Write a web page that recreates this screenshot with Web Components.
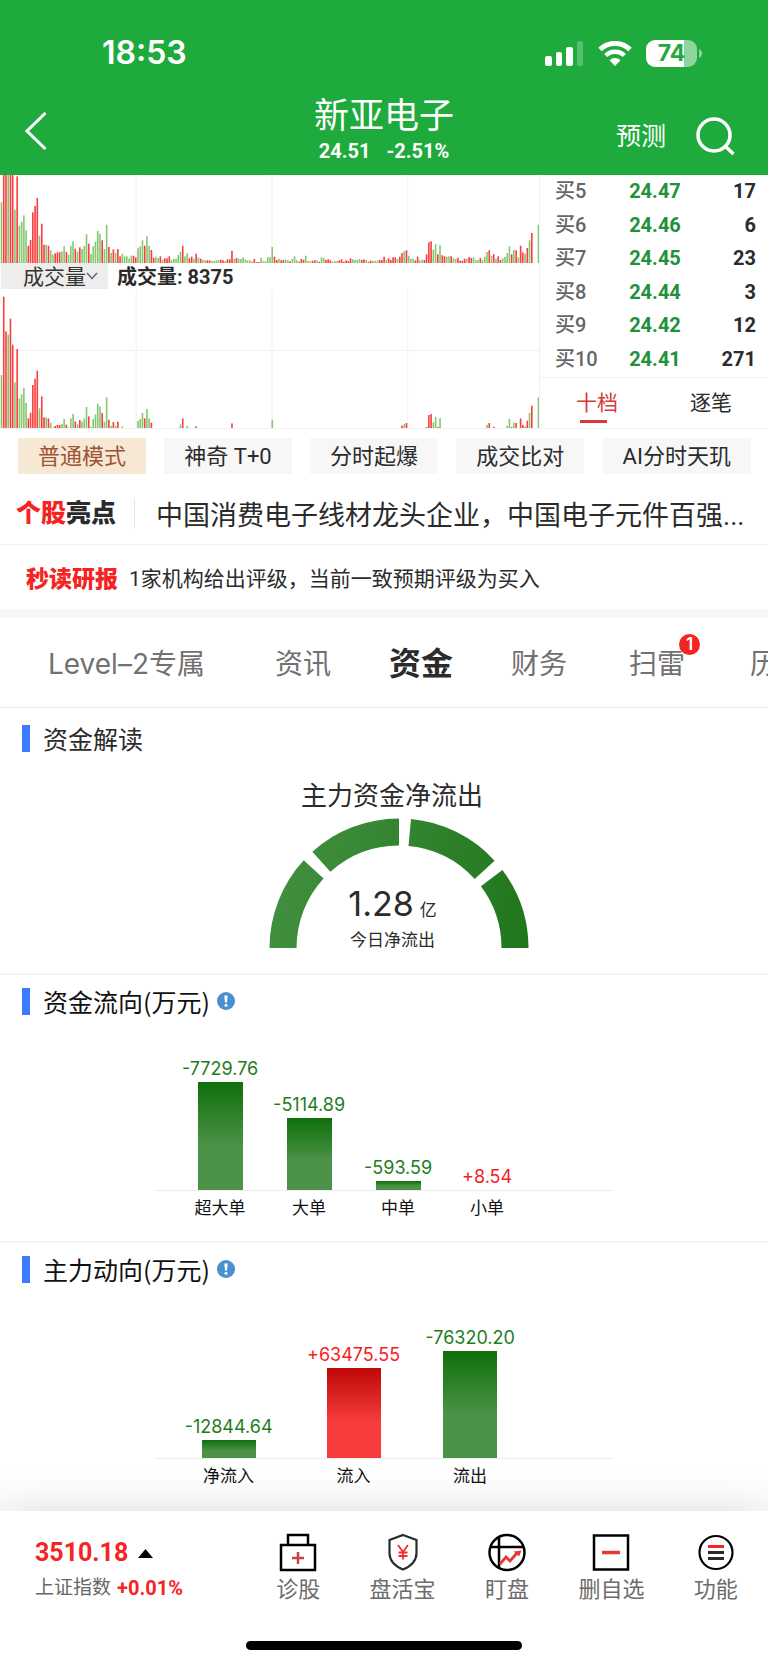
<!DOCTYPE html>
<html lang="zh-CN">
<head>
<meta charset="utf-8">
<meta name="viewport" content="width=device-width, initial-scale=1">
<title>新亚电子 24.51</title>
<style>
  html { background: #fff; }
  body {
    margin: 0;
    font-family: Inter, "Noto Sans CJK SC", sans-serif;
    color: #2b2b2b;
    --num: Roboto, "Noto Sans CJK SC", sans-serif;
    --green: #1eaa3c;
    --red: #f62323;
    --line: #f0f0f0;
  }
  news-line em { font-style: normal; color: var(--red); }
</style>
</head>
<body>
<stock-page>
  <status-bar slot="top"></status-bar>
  <stock-header slot="top" name="新亚电子" price="24.51" change="-2.51%"></stock-header>

  <market-panel>
    <volume-charts></volume-charts>
    <order-book slot="book"></order-book>
  </market-panel>
  <mode-chips></mode-chips>
  <news-line kind="highlight"><span slot="tag"><em>个股</em>亮点</span>中国消费电子线材龙头企业，中国电子元件百强...</news-line>
  <news-line kind="report"><span slot="tag">秒读研报</span>1家机构给出评级，当前一致预期评级为买入</news-line>
  <page-tabs></page-tabs>

  <info-section heading="资金解读" soft>
    <fund-gauge heading="主力资金净流出" value="1.28" unit="亿">今日净流出</fund-gauge>
  </info-section>
  <info-section heading="资金流向(万元)" help>
    <bar-chart kind="flow"></bar-chart>
  </info-section>
  <info-section heading="主力动向(万元)" help>
    <bar-chart kind="main"></bar-chart>
  </info-section>

  <bottom-bar slot="bottom"></bottom-bar>
</stock-page>

<script>
const element = (name, render) => customElements.define(name, class extends HTMLElement {
  connectedCallback() {
    if (this.shadowRoot) return;
    this.attachShadow({ mode: 'open' }).innerHTML = render(this);
  }
});

const RESET = `
  :host, *, *::before { box-sizing: border-box; }
  button { margin: 0; padding: 0; border: 0; background: none; font: inherit; color: inherit; cursor: pointer; white-space: nowrap; }
  svg { display: block; }
`;

element('stock-page', () => `
  <style>
    :host { display: flex; flex-direction: column; min-height: 100vh; overflow: hidden; }
    header { background: var(--green); color: #fff; }
    main { flex: 1; }
  </style>
  <header><slot name="top"></slot></header>
  <main><slot></slot></main>
  <slot name="bottom"></slot>`);

element('status-bar', () => `
  <style>${RESET}
    :host { display: flex; align-items: center; justify-content: space-between; padding: 33px 66px 0 102px; }
    time { font-size: 32px; line-height: 40px; font-weight: 600; }
    .state { display: flex; align-items: center; gap: 14px; }
    .battery { display: flex; align-items: center; gap: 1px; }
    .level { width: 51px; height: 27px; border-radius: 9px; text-align: center; font-size: 23px; font-weight: 700;
      line-height: 27px; color: var(--green); background: linear-gradient(90deg, #fff 38px, #8fd49d 38px); }
  </style>
  <time>18:53</time>
  <div class="state">
    <svg width="39" height="26" viewBox="0 0 39 26" fill="#fff" aria-label="信号">
      <rect x="0" y="16" width="7" height="10" rx="2"/><rect x="11" y="12" width="6" height="14" rx="2"/>
      <rect x="21" y="7" width="7" height="19" rx="2"/><rect x="32" y="1" width="6" height="25" rx="2" opacity=".25"/>
    </svg>
    <svg width="34" height="25" viewBox="0 0 34 25" aria-label="无线网络">
      <path d="M2 8.5a21.500 21.500 0 0 1 30 0" fill="none" stroke="#fff" stroke-width="5"/>
      <path d="M7.700 14.500a13.300 13.300 0 0 1 18.600 0" fill="none" stroke="#fff" stroke-width="4.500"/>
      <path d="M17 25l-5.500-5.800a8 8 0 0 1 11 0z" fill="#fff"/>
    </svg>
    <div class="battery"><div class="level">74</div>
      <svg width="4" height="9" viewBox="0 0 4 9"><path d="M1 0q3 1.500 3 4.500t-3 4.500z" fill="#8fd49d"/></svg>
    </div>
  </div>`);

element('stock-header', el => `
  <style>${RESET}
    :host { display: grid; grid-template-columns: 1fr auto 1fr; height: 102px; padding: 0 25px; }
    .back { align-self: center; justify-self: start; padding-top: 13px; }
    .title { padding-top: 17px; text-align: center; }
    h1 { margin: 0; font-size: 35px; line-height: 50px; font-weight: 400; }
    p { margin: 0; font: 700 20px/22px var(--num); display: flex; gap: 16px; justify-content: center; }
    .tools { display: flex; align-items: center; justify-content: flex-end; gap: 30px; padding: 24px 8px 0 0; }
    .predict { font-size: 25px; line-height: 36px; }
  </style>
  <button class="back" aria-label="返回">
    <svg width="22" height="38" viewBox="0 0 22 38" fill="none" stroke="#fff" stroke-width="3"><path d="M20.500 1 2 19l18.500 18"/></svg>
  </button>
  <div class="title">
    <h1>${el.getAttribute('name')}</h1>
    <p><span>${el.getAttribute('price')}</span><span>${el.getAttribute('change')}</span></p>
  </div>
  <div class="tools">
    <button class="predict">预测</button>
    <button aria-label="搜索">
      <svg width="39" height="38" viewBox="0 0 39 38" fill="none" stroke="#fff" stroke-width="3.500"><circle cx="18" cy="18" r="16"/><path d="M29 29l8.500 8"/></svg>
    </button>
  </div>`);

element('market-panel', () => `
  <style>
    :host { display: grid; grid-template-columns: minmax(0, 1fr) 228px; border-bottom: 1px solid var(--line); }
  </style>
  <slot></slot><slot name="book"></slot>`);

/* One entry per trading minute: direction, then volume in thirds of a pixel. */
const VOLUME = `g182 r417 r313 g303 r351 r273 g160 r260 g112 g124 g143 g98 r52 r69 r152 r171 r195 g82 r118 r55 g55 r52 g38 g25 r29 r32 r32 g35 g50 r33 g25 g52 g65 r43 g34 r47 g42 g51 g86 r58 g27 g50 g64 g96 g88 r68 g42 g115 r48 g30 r41 g30 r42 r20 g28 g20 g20 g13 g22 r22 r17
 g44 g50 g68 r52 g80 g52 r39 r16 g19 g15 r20 g10 r14 r14 r20 g9 g13 g13 g24 g34 r52 g20 g29 r14 r19 g13 r28 g17 r13 g10 g8 r8 r8 g6 g6 g8 g9 r10 r8 g6 r11 r11 r37 g12 r15 g13 g12 g17 g10 g8 g8 g5 r12 r3 r3 g16 g5 g6 g17
 g17 g48 r19 r9 g13 r8 r9 g11 g8 r5 g12 g20 g8 g5 r12 r10 g22 g6 g5 r7 r8 g8 r4 g17 g15 r9 r11 r8 g4 g6 g6 r8 r11 r4 r8 r6 r14 g11 g9 g10 g12 r9 r11 g9 r4 r7 g7 g6 g7 r9 r9 r19 g10 r14 r9 r17 r17 g12 r19 r30 g35 r38
 g22 g13 g13 r8 r19 g8 g10 r9 r26 r62 r65 g40 g57 r26 g53 r23 r20 g19 g20 r20 g14 g12 r16 r7 r7 r13 g13 r18 r15 g17 g9 g9 r15 g9 g19 g33 r38 g22 r26 g13 r20 r9 g14 g18 g30 g50 r26 g39 r38 g17 r52 r32 g28 r45 g68 r90 g0 g0 g115`.split(/\s+/);
const PITCH = 538 / (VOLUME.length - 1);

const volumeBars = (height, floor) => VOLUME.map((v, i) => {
  const size = Math.min(height, v.slice(1) / 3 - floor);
  return size > 0 ? `<rect class="${v[0]}" x="${(0.7 + i * PITCH).toFixed(2)}" y="${(height - size).toFixed(1)}" width="1.600" height="${size.toFixed(1)}"/>` : '';
}).join('');

element('volume-charts', () => `
  <style>${RESET}
    :host { display: block; border-right: 1px solid var(--line); }
    svg { width: 100%; }
    .grid { stroke: #f1f1f1; stroke-width: 1; }
    .r { fill: #fa3c3c; } .g { fill: #83c870; }
    .bar { display: flex; height: 27px; padding-left: 1px; gap: 9px; }
    .pick { display: grid; width: 107px; height: 26px; background: #ededed; }
    .pick > * { grid-area: 1 / 1; }
    .pick svg { width: 12px; align-self: center; justify-self: end; margin-right: 10px; pointer-events: none; }
    select { appearance: none; border: 0; margin: 0; background: none; padding: 0 0 0 22px; height: 24px; font: 400 21px/24px "Noto Sans CJK SC", sans-serif; color: #333; }
    .now { font: 700 20px/28px Roboto, "Noto Sans CJK SC", sans-serif; }
  </style>
  <svg height="88" viewBox="0 0 540 88" preserveAspectRatio="none">
    <path class="grid" d="M136.500 0v88M272.500 0v88M408.500 0v88"/>${volumeBars(88, 0)}
  </svg>
  <div class="bar">
    <div class="pick">
      <select aria-label="指标"><option>成交量</option></select>
      <svg width="12" height="8" viewBox="0 0 12 8" fill="none" stroke="#666" stroke-width="1.500"><path d="M1 1l5 5.500L11 1"/></svg>
    </div>
    <span class="now">成交量: 8375</span>
  </div>
  <svg height="138" viewBox="0 0 540 138" preserveAspectRatio="none">
    <path class="grid" d="M136.500 0v138M272.500 0v138M408.500 0v138M0 60.500h540"/>${volumeBars(138, 7.7)}
  </svg>`);

const BIDS = [['买5', '24.47', 17], ['买6', '24.46', 6], ['买7', '24.45', 23], ['买8', '24.44', 3], ['买9', '24.42', 12], ['买10', '24.41', 271]];

element('order-book', () => `
  <style>${RESET}
    :host { display: flex; flex-direction: column; }
    table { width: 100%; border-collapse: collapse; margin-bottom: 1px; }
    th, td { padding: 0; height: 33px; line-height: 33px; font-family: Roboto, "Noto Sans CJK SC", sans-serif; font-size: 20px; }
    tr:nth-child(even) > * { height: 34px; }
    th { width: 80px; padding-left: 15px; text-align: left; font-weight: 500; color: #666; }
    td { font-weight: 700; text-align: right; padding-right: 12px; }
    .price { width: 70px; padding: 0; text-align: center; color: #21913a; }
    .tabs { flex: 1; display: grid; grid-template-columns: 1fr 1fr; border-top: 1px solid var(--line); }
    .tabs button { display: grid; justify-items: center; align-content: start; padding-top: 8px; gap: 4px; font: 400 21px/30px "Noto Sans CJK SC", sans-serif; }
    .tabs .on { color: #d63a3a; }
    .on::after { content: ""; width: 27px; height: 3px; margin-right: 8px; background: #d63a3a; }
  </style>
  <table>${BIDS.map(([k, p, q]) => `<tr><th scope="row">${k}</th><td class="price">${p}</td><td>${q}</td></tr>`).join('')}</table>
  <div class="tabs"><button class="on">十档</button><button>逐笔</button></div>`);

element('mode-chips', () => `
  <style>${RESET}
    :host { display: flex; justify-content: space-between; padding: 9px 17px 0 18px; }
    button { height: 36px; padding: 0 20px; background: #f7f7f7; font: 400 22px/35px Roboto, "Noto Sans CJK SC", sans-serif; }
    .on { background: #f7e8d5; color: #9c5535; }
  </style>
  ${['普通模式', '神奇 T+0', '分时起爆', '成交比对', 'AI分时天玑'].map((t, i) => `<button${i ? '' : ' class="on"'}>${t}</button>`).join('')}`);

element('news-line', () => `
  <style>${RESET}
    :host { display: flex; align-items: center; white-space: nowrap; font-family: Roboto, "Noto Sans CJK SC", sans-serif; }
    :host([kind=highlight]) { height: 71px; padding: 9px 16px 0; border-bottom: 1px solid var(--line); font-size: 27px; }
    :host([kind=report]) { height: 64px; padding-left: 26px; font-size: 21px; }
    ::slotted([slot=tag]) { font-weight: 900; }
    .tag { flex: none; }
    :host([kind=highlight]) .tag { font-size: 25px; line-height: 30px; padding-right: 18px; margin-right: 21px; border-right: 1px solid #e4e4e4; }
    :host([kind=report]) .tag { font-size: 23px; margin-right: 11px; color: var(--red); }
    .text { overflow: hidden; text-overflow: ellipsis; }
  </style>
  <div class="tag"><slot name="tag"></slot></div><div class="text"><slot></slot></div>`);

element('page-tabs', () => `
  <style>${RESET}
    :host { display: block; border-top: 9px solid #f7f7f7; border-bottom: 1px solid #e9e9e9; }
    nav { display: flex; height: 89px; padding-left: 9px; overflow: hidden; color: #717171; }
    a { flex: 0 0 118px; display: flex; align-items: center; justify-content: center; padding-top: 2px; font-size: 28px; line-height: 40px; color: inherit; text-decoration: none; white-space: nowrap; }
    a.wide { flex-basis: 235px; }
    a:last-child { flex-basis: 124px; }
    a.on { color: #2b2b2b; font-size: 32px; font-weight: 700; }
    .mark { position: relative; }
    .badge { position: absolute; left: 50px; top: -10px; width: 21px; height: 21px; border-radius: 50%; background: var(--red); color: #fff; font-size: 17px; font-weight: 600; line-height: 21px; text-align: center; }
  </style>
  <nav>
    <a class="wide" href="#level2">Level–2专属</a><a href="#news">资讯</a><a class="on" href="#funds">资金</a><a href="#finance">财务</a>
    <a href="#risk"><span class="mark">扫雷<span class="badge">1</span></span></a><a href="#history">历史</a>
  </nav>`);

element('info-section', el => `
  <style>${RESET}
    :host { display: block; border-bottom: 2px solid #f3f3f3; }
    :host(:last-of-type) { border: 0; }
    .head { display: flex; align-items: center; padding: 6px 22px 0; }
    :host([soft]) .head { padding-top: 10px; }
    .head::before { content: ""; width: 8px; height: 27px; background: #3a7bff; margin-right: 13px; }
    h2 { margin: 0; font: 400 25px/40px "Noto Sans CJK SC", sans-serif; color: #111; }
    :host([soft]) h2 { color: #2b2b2b; }
    button { margin-left: 7px; }
  </style>
  <div class="head"><h2>${el.getAttribute('heading')}</h2>${el.hasAttribute('help') ? `
    <button aria-label="说明"><svg width="18" height="18" viewBox="0 0 18 18"><circle cx="9" cy="9" r="9" fill="#4a8fd0"/><path d="M7.300 3.500h3.400l-.7 7h-2z" fill="#fff"/><circle cx="9" cy="13.300" r="1.500" fill="#fff"/></svg></button>` : ''}
  </div>
  <slot></slot>`);

const arc = (from, to) => {
  const at = (r, deg) => `${(136 + r * Math.cos(deg * Math.PI / 180)).toFixed(1)} ${(130 - r * Math.sin(deg * Math.PI / 180)).toFixed(1)}`;
  return `<path d="M${at(129.5, from)}A129.500 129.500 0 0 1 ${at(129.5, to)}L${at(102.5, to)}A102.500 102.500 0 0 0 ${at(102.5, from)}z"/>`;
};

element('fund-gauge', el => `
  <style>${RESET}
    :host { display: grid; justify-items: center; padding: 16px 0 25px 16px; }
    h3 { margin: 0; font-size: 26px; line-height: 44px; font-weight: 400; }
    .dial { display: grid; margin-left: 14px; }
    .dial > * { grid-area: 1 / 1; }
    .text { align-self: end; text-align: center; padding-right: 13px; }
    .value { font-size: 34px; line-height: 44px; }
    .value small { font-size: 17px; margin-left: 6px; }
    .note { font-size: 17px; line-height: 16px; }
  </style>
  <h3>${el.getAttribute('heading')}</h3>
  <div class="dial">
    <svg width="272" height="130" viewBox="0 0 272 130">
      <defs><linearGradient id="g" gradientUnits="userSpaceOnUse" x1="6" y1="60" x2="266" y2="120"><stop stop-color="#429040"/><stop offset="1" stop-color="#20761c"/></linearGradient></defs>
      <g fill="url(#g)">${arc(180, 137.4)}${arc(132, 90)}${arc(84.7, 42.4)}${arc(37, 0)}</g>
    </svg>
    <div class="text"><div class="value">${el.getAttribute('value')}<small>${el.getAttribute('unit')}</small></div><div class="note"><slot></slot></div></div>
  </div>`);

const CHARTS = {
  flow: { bar: 45, offset: 22, columns: '89px 89px 89px 89px', data: [['超大单', '-7729.76', 108], ['大单', '-5114.89', 72], ['中单', '-593.59', 9], ['小单', '+8.54', 0]] },
  main: { bar: 54, offset: 14, columns: '122px 128px 105px', data: [['净流入', '-12844.64', 18], ['流入', '+63475.55', 90], ['流出', '-76320.20', 107]] }
};

element('bar-chart', el => {
  const chart = CHARTS[el.getAttribute('kind')];
  const row = (fn) => `<div class="row">${chart.data.map(fn).join('')}</div>`;
  return `
  <style>${RESET}
    :host { display: block; padding: 0 20%; }
    .row { display: grid; grid-template-columns: ${chart.columns}; padding-left: ${chart.offset}px; justify-items: center; }
    .row:first-of-type { height: 170px; align-items: end; border-bottom: 1px solid #ececec; }
    .item { display: grid; justify-items: center; font-size: 18px; line-height: 22px; gap: 2px; color: #1d7d1d; }
    .item i { display: block; width: ${chart.bar}px; background: linear-gradient(#0f700b, #4c9248 60%, #4c9248); }
    .up { color: #f81c1c; }
    .up i { background: linear-gradient(#c00808, #f63c3c 60%, #f63c3c); }
    .name { padding: 3px 0 19px; font-size: 17px; line-height: 28px; color: #111; }
  </style>
  ${row(([, v, h]) => `<div class="item${v[0] === '+' ? ' up' : ''}">${v}<i style="height:${h}px"></i></div>`)}
  ${row(([n]) => `<div class="name">${n}</div>`)}`;
});

const TOOLS = [
  ['诊股', '<path d="M2 12h34v25H2zM9 12V2h20v10" stroke="#000" stroke-width="2.500"/><path d="M13 25h12M19 19v12" stroke="#c4463f" stroke-width="2.500"/>'],
  ['盘活宝', '<path d="M19 2l13.500 5v13c0 8-5 13-13.500 16.500C10.500 33 5.500 28 5.500 20V7z" stroke="#2b2b2b" stroke-width="2.200"/><path d="M14 12l5 7 5-7M19 19v7.500M14.500 19.500h9M14.500 23h9" stroke="#f03030" stroke-width="1.800"/>'],
  ['盯盘', '<circle cx="19" cy="19.500" r="17.500" stroke="#000" stroke-width="2.500"/><path d="M3 14h32M11 4v31" stroke="#000" stroke-width="2.500"/><path d="M12 31l6-7 4 4 7-8" stroke="#e53a31" stroke-width="2.800"/><path d="M25.500 18.500l8-1-2.500 6z" fill="#e53a31"/>'],
  ['删自选', '<path d="M2 2.500h34v34H2z" stroke="#000" stroke-width="2.500"/><path d="M10 19.500h18" stroke="#e53a31" stroke-width="3.500"/>'],
  ['功能', '<circle cx="19" cy="19.500" r="16.500" stroke="#000" stroke-width="2.200"/><path d="M11 13.500h16" stroke="#f62323" stroke-width="3"/><path d="M11 19.500h16M11 25.500h16" stroke="#2b2b2b" stroke-width="2.800"/>']
];

element('bottom-bar', () => `
  <style>${RESET}
    :host { display: block; position: relative; background: #fff; box-shadow: 0 0 44px rgba(0, 0, 0, .15); }
    .bar { display: flex; height: 130px; padding-top: 22px; }
    .index { flex: 0 0 246px; padding: 4px 0 0 35px; }
    .point { display: flex; align-items: center; gap: 10px; font: 700 25px/32px var(--num); color: var(--red); }
    .point svg { fill: #000; }
    .day { display: flex; gap: 6px; padding-top: 4px; font-size: 19px; line-height: 30px; color: #666; }
    .day b { font: 700 20px/30px var(--num); color: var(--red); }
    nav { flex: 1; display: grid; grid-template-columns: repeat(5, 1fr); align-items: start; }
    nav button { display: grid; justify-items: center; font-size: 22px; line-height: 30px; color: #6c6c6c; font-family: "Noto Sans CJK SC", sans-serif; }
    .home { width: 36%; height: 9px; margin: 0 auto; border-radius: 5px; background: #000; }
    .foot { padding-bottom: 15px; }
  </style>
  <div class="bar">
    <div class="index">
      <div class="point">3510.18 <svg width="15" height="9" viewBox="0 0 15 9"><path d="M0 9 7.500 0 15 9z"/></svg></div>
      <div class="day">上证指数 <b>+0.01%</b></div>
    </div>
    <nav>${TOOLS.map(([t, d]) => `<button><svg width="38" height="39" viewBox="0 0 38 39" fill="none">${d}</svg>${t}</button>`).join('')}</nav>
  </div>
  <div class="foot"><div class="home"></div></div>`);
</script>
</body>
</html>
